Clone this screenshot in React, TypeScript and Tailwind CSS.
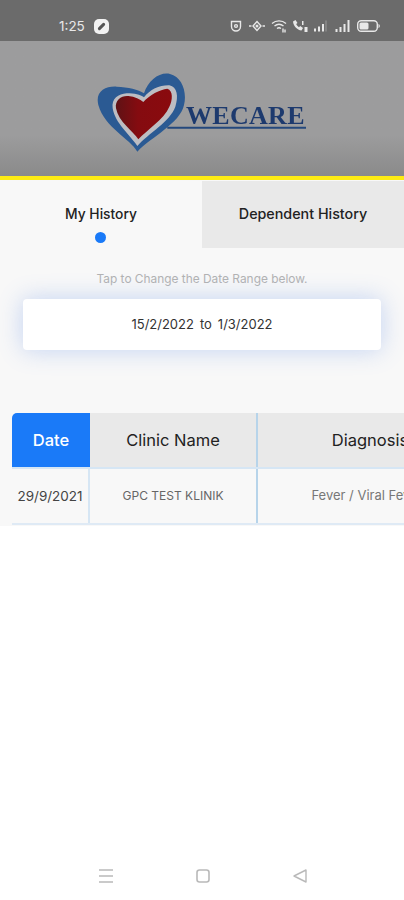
const font = { fontFamily: 'Inter, "Noto Sans", sans-serif' }

function StatusIcons() {
  return (
    <div className="flex items-center gap-[5px] text-[#e8e8e8]">
      {/* alarm */}
      <svg width="14" height="14" viewBox="0 0 14 14" fill="none" stroke="currentColor" strokeWidth="1.400">
        <path d="M2.500 2.500h9v5a4.500 4.500 0 0 1-9 0z" />
        <circle cx="7" cy="7" r="1.400" />
      </svg>
      {/* vibrate */}
      <svg width="18" height="12" viewBox="0 0 18 12" fill="none" stroke="currentColor" strokeWidth="1.400">
        <path d="M9 1.500 13 6l-4 4.500L5 6z" />
        <path d="M1 6h2.500M14.500 6H17" />
        <circle cx="9" cy="6" r="0.800" fill="currentColor" />
      </svg>
      {/* wifi */}
      <svg width="16" height="14" viewBox="0 0 16 14" fill="none" stroke="currentColor" strokeWidth="1.400">
        <path d="M1 4.500c4-3.500 10-3.500 14 0M3.500 7c2.600-2 6.400-2 9 0M6 9.500c1.200-.8 2.800-.8 4 0" />
        <path d="M12 9.500v4M14 10.500v3" />
      </svg>
      {/* volte call */}
      <svg width="16" height="14" viewBox="0 0 16 14" fill="currentColor">
        <path d="M1 2.500 3.500 1l2 3-1.300 1c.6 1.400 1.500 2.400 2.800 3.200l1.200-1.200L11 9l-1.500 2.500C5 11 1.500 7 1 2.500z" />
        <rect x="10" y="2" width="1.500" height="4" />
        <rect x="12.500" y="8" width="3" height="5" />
      </svg>
      {/* signal 1 */}
      <svg width="14" height="12" viewBox="0 0 14 12" fill="currentColor">
        <rect x="1" y="8.500" width="2" height="3" />
        <rect x="5" y="6.500" width="2" height="5" />
        <rect x="9" y="4" width="2" height="7.500" />
        <rect x="12.500" y="0.500" width="1" height="11" opacity="0.4" />
      </svg>
      {/* signal 2 */}
      <svg width="15" height="14" viewBox="0 0 15 14" fill="currentColor" className="ml-[3px]">
        <rect x="0.500" y="10" width="2" height="3" />
        <rect x="4.500" y="8" width="2" height="5" />
        <rect x="8.500" y="5" width="2" height="8" />
        <rect x="12.500" y="1" width="2" height="12" />
      </svg>
      {/* battery */}
      <svg width="23" height="12" viewBox="0 0 23 12" className="ml-[2px]">
        <rect x="0.700" y="0.700" width="19.600" height="10.600" rx="3.500" fill="none" stroke="currentColor" strokeWidth="1.400" />
        <rect x="2.500" y="2.500" width="9" height="7" rx="1.500" fill="currentColor" />
        <path d="M21.500 4v4c.8-.3 1.300-1 1.300-2s-.5-1.700-1.300-2z" fill="currentColor" />
      </svg>
    </div>
  )
}

function Logo() {
  return (
    <div className="relative w-[240px] h-[130px] blur-[0.7px]">
      <svg width="240" height="130" viewBox="0 0 720 390" className="absolute left-0 top-0">
        <defs>
          <linearGradient id="red" x1="0" y1="0" x2="1" y2="0">
            <stop offset="0" stopColor="#5f1215" />
            <stop offset="0.4" stopColor="#850b10" />
            <stop offset="1" stopColor="#8a0a0e" />
          </linearGradient>
        </defs>
        <path
          d="M172 275 C150 235 75 205 55 135 C45 95 75 78 110 80 C145 82 175 88 192 100 C205 60 240 35 270 42 C305 50 322 95 312 135 C300 190 215 230 172 275 Z"
          fill="#2b5a93"
        />
        <path
          d="M172 258 C150 225 105 190 98 145 C94 115 115 102 140 100 C165 100 180 104 192 112 C210 88 240 75 268 76 C292 80 296 110 286 140 C270 185 205 220 172 258 Z"
          fill="#bdbdc2"
        />
        <path
          d="M175 238 C160 215 115 185 108 145 C104 120 125 106 145 108 C165 110 180 118 190 126 C208 105 240 88 262 86 C280 92 278 120 268 140 C252 178 200 210 175 238 Z"
          fill="url(#red)"
        />
        <path d="M262 203 H678" stroke="#24487d" strokeWidth="6" />
      </svg>
      <span
        className="absolute left-[106px] top-[41px] text-[26px] leading-[30px] font-bold text-[#1d3a6e] tracking-[0.3px]"
        style={{ fontFamily: '"Liberation Serif", serif' }}
      >
        WECARE
      </span>
    </div>
  )
}

export default function App() {
  return (
    <div className="w-[404px] h-[900px] bg-white flex flex-col overflow-hidden relative" style={font}>
      <div className="h-[41px] bg-[#6b6b6b] shrink-0 flex items-center justify-between pt-[11px] pl-[59px] pr-[24px]">
        <div className="flex items-center gap-[9px]">
          <span className="text-[13.500px] text-[#e8e8e8]">1:25</span>
          <span className="w-[15px] h-[15px] rounded-[5px] bg-[#f2f2f2] flex items-center justify-center">
            <span className="w-[9px] h-[3px] bg-[#555] -rotate-45 rounded-full" />
          </span>
        </div>
        <StatusIcons />
      </div>

      <div className="h-[135px] shrink-0 bg-gradient-to-b from-[#9c9c9d] from-70% to-[#8a8a8a] flex items-start justify-center pt-[19px] pr-[4px]">
        <Logo />
      </div>
      <div className="h-[4px] shrink-0 bg-[#fdeb13]" />

      <div className="bg-[#f8f8f8] flex flex-col h-[346px] shrink-0">
        <div className="flex h-[68px] shrink-0">
          <div className="w-[202px] flex flex-col items-center pt-[25px]">
            <span className="text-[13.800px] leading-[18px] font-medium text-[#222]">My History</span>
            <span className="w-[11px] h-[11px] rounded-full bg-[#1a7af8] mt-[9px] -ml-[2px]" />
          </div>
          <div className="flex-1 flex pt-[1px]">
            <div className="flex-1 bg-[#e9e9e9] flex justify-center pt-[24px]">
              <span className="text-[14.300px] leading-[18px] font-medium text-[#222]">Dependent History</span>
            </div>
          </div>
        </div>

        <p className="text-center text-[11.900px] leading-[14px] text-[#b3b3b3] mt-[24px]">Tap to Change the Date Range below.</p>

        <div className="mx-[23px] mt-[13px] h-[51px] shrink-0 bg-white rounded-[4px] shadow-[0_0_24px_rgba(80,130,230,0.32)] flex items-center justify-center gap-[6px] text-[13px] text-[#333]">
          <span>15/2/2022</span>
          <span>to</span>
          <span>1/3/2022</span>
        </div>

        <div className="mt-[63px] ml-[12px] overflow-hidden">
          <div className="flex h-[56px] w-[500px] border-b-2 border-[#d6e6f4]">
            <div className="w-[78px] bg-[#1a7af8] rounded-tl-[5px] flex items-center justify-center text-white text-[16.500px] font-medium">Date</div>
            <div className="w-[168px] bg-[#e9e9e9] border-r-2 border-[#b7d4ea] flex items-center justify-center text-[16.500px] text-[#222]">Clinic Name</div>
            <div className="w-[228px] bg-[#e9e9e9] flex items-center justify-center text-[16.500px] text-[#222] pr-[4px]">Diagnosis</div>
          </div>
          <div className="flex h-[56px] w-[500px] border-b-2 border-[#dfeaf5]">
            <div className="w-[78px] border-r-2 border-[#d6e6f4] flex items-center justify-center text-[13.500px] text-[#444]">29/9/2021</div>
            <div className="w-[168px] border-r-2 border-[#b7d4ea] flex items-center justify-center text-[12px] text-[#666]">GPC TEST KLINIK</div>
            <div className="w-[228px] flex items-center justify-center text-[13px] text-[#777] whitespace-nowrap pr-[10px]">Fever / Viral Fever</div>
          </div>
        </div>
      </div>

      <div className="mt-auto h-[32px] flex items-start justify-center gap-[81px] text-[#b9b9b9] pl-[2px]">
        <svg width="16" height="16" viewBox="0 0 16 16" fill="none" stroke="currentColor" strokeWidth="1.600">
          <path d="M1 2h14M1 8h14M1 14h14" />
        </svg>
        <svg width="16" height="16" viewBox="0 0 16 16" fill="none" stroke="currentColor" strokeWidth="1.600">
          <rect x="2" y="2" width="12" height="12" rx="2.500" />
        </svg>
        <svg width="16" height="16" viewBox="0 0 16 16" fill="none" stroke="currentColor" strokeWidth="1.400">
          <path d="M14 2v12L2 8z" strokeLinejoin="round" />
        </svg>
      </div>
    </div>
  )
}
